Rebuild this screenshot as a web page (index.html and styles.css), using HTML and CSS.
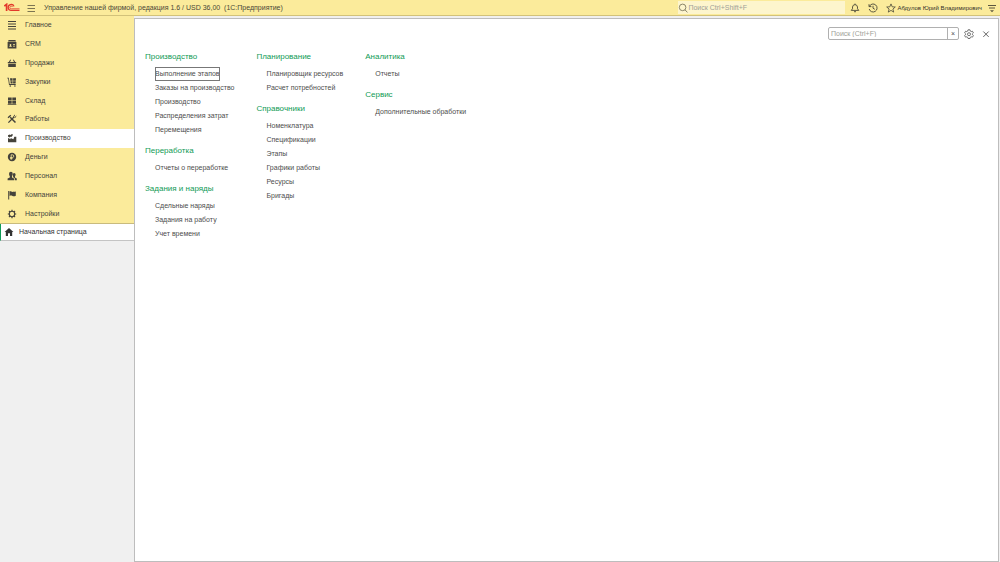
FILE: index.html
```html
<!DOCTYPE html>
<html lang="ru">
<head>
<meta charset="utf-8">
<meta name="viewport" content="width=device-width, initial-scale=1">
<title>Управление нашей фирмой</title>
<link rel="stylesheet" href="styles.css">
</head>
<body>
<header class="topbar">
  <svg class="logo" viewBox="0 0 16 9" fill="none" stroke="#e2382b" aria-label="1С"><path d="M.3 3.2 2.6 1.4V8" stroke-width="1.7"/><path d="M10 3.4A3 3 0 1 0 7.4 7.4H15.5" stroke-width="1.3"/><path d="M8.6 4A1.4 1.4 0 1 0 7.4 5.8H15.5" stroke-width=".8"/></svg>
  <button class="icon-btn menu-btn" aria-label="Меню"><svg class="icon" viewBox="0 0 10 10" fill="none" stroke="#5c573f" stroke-width=".8"><path d="M1.5 2.5h7.5M1.5 5.5h7.5M1.5 8.5h7.5"/></svg></button>
  <h1 class="title">Управление нашей фирмой, редакция 1.6 / USD 36,00 &nbsp;(1С:Предприятие)</h1>
  <label class="global-search">
    <svg class="icon" viewBox="0 0 10 10" fill="none" stroke="#6f6a50" stroke-width=".8"><circle cx="4.6" cy="4.4" r="3.3"/><path d="m7 6.8 2.4 2.6"/></svg>
    <input class="global-input" type="text" placeholder="Поиск Ctrl+Shift+F" aria-label="Глобальный поиск">
  </label>
  <div class="tools">
    <button class="icon-btn" aria-label="Уведомления"><svg class="icon" viewBox="0 0 10 10" fill="none" stroke="#4a4738" stroke-width=".9"><path d="M1.2 7.4h7.6L7.5 5.8V4Q7.2 1.7 5 1.6 2.8 1.7 2.5 4v1.8zM5 .6v1M4 8.7h2"/></svg></button>
    <button class="icon-btn" aria-label="История"><svg class="icon" viewBox="0 0 10 10" fill="none" stroke="#4a4738" stroke-width=".9"><path d="M1.4 3.4A4 4 0 1 1 1.2 6M1 1.2v2.4h2.4M5 2.8v2.4l1.8 1.1"/></svg></button>
    <button class="icon-btn" aria-label="Избранное"><svg class="icon" viewBox="0 0 10 10" fill="none" stroke="#4a4738" stroke-width=".8"><path d="m5 .9 1.2 2.9 3.1.2-2.4 2 .8 3.1L5 7.4 2.3 9.1l.8-3.1-2.4-2 3.1-.2z"/></svg></button>
  </div>
  <a class="user" href="#">Абдулов Юрий Владимирович</a>
  <button class="icon-btn" aria-label="Параметры"><svg class="icon" viewBox="0 0 10 10" fill="none" stroke="#5c573f"><path d="M1 2.5h8M2 5h6"/><path d="M3 7.2h4L5 9.2z" fill="#5c573f" stroke="none"/></svg></button>
</header>
<div class="workspace">
  <aside class="sidebar">
    <nav class="sections">
      <a class="section" href="#"><svg class="icon" viewBox="0 0 10 10" fill="none" stroke="currentColor"><path d="M1 1.5h8M1 4h8M1 6.5h8M1 9h8"/></svg>Главное</a>
      <a class="section" href="#"><svg class="icon" viewBox="0 0 10 10" fill="currentColor"><path d="M1.6 1h6.8l.6 1.4H1z"/><path fill-rule="evenodd" d="M.6 3h8.8v6.4H.6zM2.2 7.8h2.6c0-.8-.4-1.2-.8-1.3a.8.8 0 1 0-1 0c-.4.1-.8.5-.8 1.3M6 5.2v.8h2v-.8zm0 1.6v.8h2v-.8z"/></svg>CRM</a>
      <a class="section" href="#"><svg class="icon" viewBox="0 0 10 10" fill="currentColor"><path d="m1.8 4 1.5-2.4.7.4L3 4h4L6 2l.7-.4L8.2 4h1v1.2H.8V4z"/><path d="M1.2 5.8h7.6V9H1.2z"/></svg>Продажи</a>
      <a class="section" href="#"><svg class="icon" viewBox="0 0 10 10" fill="currentColor"><path d="M.3.8h1.5l.9 6.3h6v.8H2L1.1 1.6H.3z"/><path d="M3 1.3h2.6v2.4H3.3zM6.1 1.3H9l-.2 2.4H6.1zM3.4 4.2h2.2v2.3H3.7zM6.1 4.2h2.7l-.2 2.3H6.1z"/><circle cx="3.3" cy="9" r=".8"/><circle cx="7.9" cy="9" r=".8"/></svg>Закупки</a>
      <a class="section" href="#"><svg class="icon" viewBox="0 0 10 10" fill="currentColor"><path d="M1 1.5h3.7v3H1zM5.3 1.5H9v3H5.3zM1 5.1h3.7v2.7H1zM5.3 5.1H9v2.7H5.3zM.7 8.3h8.6V9H.7z"/></svg>Склад</a>
      <a class="section" href="#"><svg class="icon" viewBox="0 0 10 10" fill="none" stroke="currentColor"><path d="m3.2 3.2 5.3 5.3" stroke-width="1.5"/><path d="M1.4 8.6 7 3M1 3.7l2.8-2.5" stroke-width="1.3"/><path d="M8 .9 6.6 2.2l1.2 1.3L9.3 2.2"/></svg>Работы</a>
      <a class="section section-active" href="#" aria-current="page"><svg class="icon" viewBox="0 0 10 10" fill="currentColor"><path d="M1 9.2V5l2.6 1.2V5l2.8 1.2.9-2.4h2V9.2z"/><path d="M1 3.6V2.2L2.6 1.4l.8.7L5 1l1 .8-1.2 2-1.4-.1-1 .8z"/></svg>Производство</a>
      <a class="section" href="#"><svg class="icon" viewBox="0 0 10 10"><circle cx="5" cy="5" r="4.2" fill="currentColor"/><path d="M4.2 7.8V2.8h1.2a1.3 1.3 0 0 1 0 2.7H3.1M3.1 6.6h2.5" fill="none" stroke="#fbeb9b" stroke-width=".8"/></svg>Деньги</a>
      <a class="section" href="#"><svg class="icon" viewBox="0 0 10 10" fill="currentColor"><ellipse cx="3.9" cy="3.1" rx="1.9" ry="2.4"/><path d="M.6 9.2V7.6l2.2-1.2V4.5H5v1.9l2 1.2v1.6z"/><ellipse cx="7.2" cy="3.7" rx="1.4" ry="1.8"/><path d="M6.4 5H8v1.5l1.8 1v1.7H7.7V7.2L5.8 6z"/></svg>Персонал</a>
      <a class="section" href="#"><svg class="icon" viewBox="0 0 10 10" fill="currentColor"><path d="M1.2 1h1v8.4h-1z"/><path d="M2.5 1.4c1.4-.5 2 .8 3.4.6V1.6c1 .4 1.7.3 2.9-.2v4.4c-1.4.7-2.4.6-3.3.1-1.1-.5-2-.5-3 0z"/></svg>Компания</a>
      <a class="section" href="#"><svg class="icon" viewBox="0 0 10 10" fill="none" stroke="currentColor"><circle cx="5" cy="5" r="2.7" stroke-width="1.1"/><path d="M5 .8v1.5M5 7.7v1.5M.8 5h1.5M7.7 5h1.5M2 2l1.1 1.1M6.9 6.9 8 8M8 2 6.9 3.1M3.1 6.9 2 8" stroke-width="1.2"/></svg>Настройки</a>
    </nav>
    <a class="home-tab" href="#"><svg class="icon" viewBox="0 0 10 10" fill="currentColor"><path d="M5 1 9.4 5H8.2v4H6V6.2H4V9H1.8V5H.6z"/></svg>Начальная страница</a>
  </aside>
  <main class="panel">
    <div class="panel-tools">
      <div class="find">
        <input class="find-input" type="text" placeholder="Поиск (Ctrl+F)" aria-label="Поиск">
        <button class="find-clear" aria-label="Очистить">×</button>
      </div>
      <button class="icon-btn" aria-label="Настройка"><svg class="icon" viewBox="0 0 10 10" fill="none" stroke="#555" stroke-width=".8"><path d="M4 .8h2l.3 1.3.9.5 1.2-.4 1 1.7-1 .9v.8l1 .9-1 1.7-1.2-.4-.9.5L6 9.5H4l-.3-1.2-.9-.5-1.2.4-1-1.7 1-.9v-.8l-1-.9 1-1.7 1.2.4.9-.5z"/><circle cx="5" cy="5.2" r="1.5"/></svg></button>
      <button class="icon-btn close-btn" aria-label="Закрыть"><svg class="icon" viewBox="0 0 10 10" stroke="#555" stroke-width=".9"><path d="m2.3 2.5 5.4 5.4M7.7 2.5 2.3 7.9"/></svg></button>
    </div>
    <div class="columns">
      <div class="column">
        <section class="group">
          <h2 class="group-title">Производство</h2>
          <a class="command command-focused" href="#">Выполнение этапов</a>
          <a class="command" href="#">Заказы на производство</a>
          <a class="command" href="#">Производство</a>
          <a class="command" href="#">Распределения затрат</a>
          <a class="command" href="#">Перемещения</a>
        </section>
        <section class="group">
          <h2 class="group-title">Переработка</h2>
          <a class="command" href="#">Отчеты о переработке</a>
        </section>
        <section class="group">
          <h2 class="group-title">Задания и наряды</h2>
          <a class="command" href="#">Сдельные наряды</a>
          <a class="command" href="#">Задания на работу</a>
          <a class="command" href="#">Учет времени</a>
        </section>
      </div>
      <div class="column">
        <section class="group">
          <h2 class="group-title">Планирование</h2>
          <a class="command" href="#">Планировщик ресурсов</a>
          <a class="command" href="#">Расчет потребностей</a>
        </section>
        <section class="group">
          <h2 class="group-title">Справочники</h2>
          <a class="command" href="#">Номенклатура</a>
          <a class="command" href="#">Спецификации</a>
          <a class="command" href="#">Этапы</a>
          <a class="command" href="#">Графики работы</a>
          <a class="command" href="#">Ресурсы</a>
          <a class="command" href="#">Бригады</a>
        </section>
      </div>
      <div class="column">
        <section class="group">
          <h2 class="group-title">Аналитика</h2>
          <a class="command" href="#">Отчеты</a>
        </section>
        <section class="group">
          <h2 class="group-title">Сервис</h2>
          <a class="command" href="#">Дополнительные обработки</a>
        </section>
      </div>
    </div>
  </main>
</div>
</body>
</html>
```
FILE: styles.css
```css
* { box-sizing: border-box; }

body {
  margin: 0;
  min-height: 100vh;
  display: flex;
  flex-direction: column;
  background: #f0f0f0;
  color: #4d4d4d;
  font: 7px/14px "Liberation Sans", Arial, sans-serif;
}

a { color: inherit; text-decoration: none; }

h1, h2 { margin: 0; font-weight: 400; }

button, input {
  margin: 0;
  padding: 0;
  border: 0;
  background: none;
  color: inherit;
  font: inherit;
}

input { min-width: 0; outline: 0; }
input::placeholder { color: #a09f98; opacity: 1; }

.icon { display: block; flex: none; width: 10px; height: 10px; }
.icon-btn { flex: none; }

.topbar {
  display: flex;
  align-items: center;
  height: 16px;
  padding: 0 3px 0 4px;
  background: #fbeb9b;
  border-bottom: 1px solid #d2c27a;
}

.logo { flex: none; width: 16px; height: 9px; }
.menu-btn { margin-left: 6px; }
.title { margin-left: 8px; color: #4a4738; font-size: 7px; white-space: nowrap; }

.global-search {
  display: flex;
  align-items: center;
  width: 167px;
  height: 13px;
  margin-left: auto;
  background: #fdf5cd;
}

.global-input { flex: 1; }
.tools { display: flex; gap: 8px; margin-left: 5px; }
.user { margin: 0 5px 0 1px; color: #33312a; font-size: 6px; white-space: nowrap; }

.workspace { flex: 1; display: flex; }
.sidebar { flex: none; width: 134px; }

.sections {
  display: grid;
  grid-auto-rows: 1fr;
  height: 208px;
  background: #fbeb9b;
  border-bottom: 1px solid #c9bb7d;
}

.section {
  display: flex;
  align-items: center;
  gap: 8px;
  padding-left: 7px;
  color: #45433b;
}

.section-active { background: #fff; }

.home-tab {
  display: flex;
  align-items: center;
  gap: 5px;
  height: 17px;
  padding-left: 3px;
  background: #fff;
  border-left: 1px solid #0f9a55;
  border-bottom: 1px solid #c4c4c4;
  color: #333;
}

.panel {
  flex: 1;
  margin: 2px 1px 0 0;
  background: #fff;
  border: 1px solid #bdbdbd;
}

.panel-tools {
  display: flex;
  align-items: center;
  justify-content: flex-end;
  padding: 8px 7px 0 0;
}

.find {
  display: flex;
  width: 131px;
  height: 13px;
  margin-right: 5px;
  border: 1px solid #b0b0b0;
  border-radius: 2px;
}

.find-input { flex: 1; padding-left: 2px; }
.find-clear { width: 11px; border-left: 1px solid #b0b0b0; line-height: 10px; }
.close-btn { margin-left: 7px; }

.columns { display: flex; gap: 22px; padding: 10px; }
.column { display: flex; flex-direction: column; gap: 7px; }
.group { display: flex; flex-direction: column; align-items: flex-start; }
.group-title { margin-bottom: 3px; color: #0f9a55; font-size: 8px; line-height: 14px; }
.command { margin-left: 10px; white-space: nowrap; }
.command-focused { outline: 1px solid #777; outline-offset: -1px; }
```
